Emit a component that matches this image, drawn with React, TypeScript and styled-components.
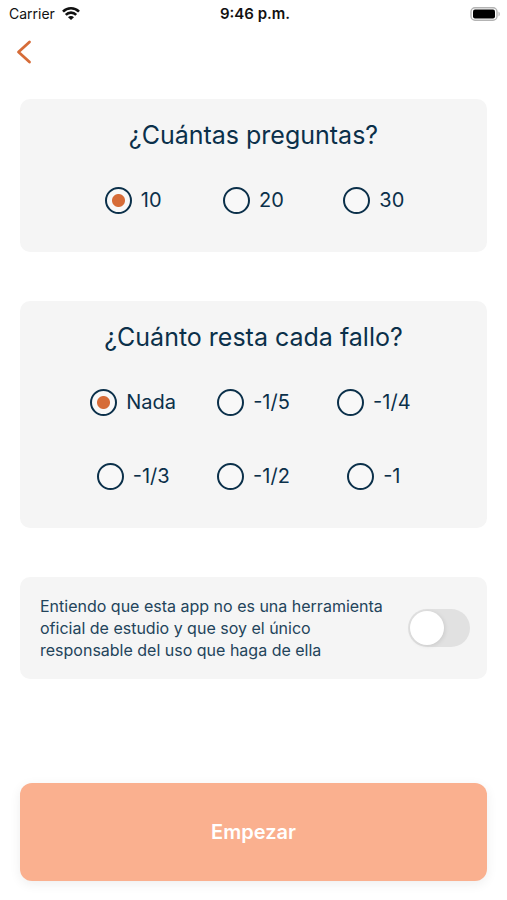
import React, { useState } from "react";
import styled, { createGlobalStyle } from "styled-components";

const Global = createGlobalStyle`
  *, *::before, *::after { box-sizing: border-box; }
  body { margin: 0; background: #fff; color: #0b304a; font-family: Inter, "Liberation Sans", sans-serif; }
`;

const Screen = styled.div`
  min-height: 100vh;
  display: flex;
  flex-direction: column;
  padding-bottom: 19px;
`;

const StatusBar = styled.header`
  display: grid;
  grid-template-columns: 1fr auto 1fr;
  align-items: center;
  height: 27px;
  padding: 0 6px 0 9px;
  color: #111;
  font-size: 14px;
`;

const Carrier = styled.span`
  display: flex;
  align-items: center;
  gap: 7px;
`;

const Clock = styled.time`
  font-size: 15px;
  font-weight: 600;
`;

const Battery = styled.svg`
  justify-self: end;
`;

const BackButton = styled.button`
  align-self: flex-start;
  display: flex;
  margin-left: 12px;
  padding: 13px 4px;
  border: 0;
  background: none;
  cursor: pointer;
`;

const Main = styled.main`
  flex: 1;
  display: flex;
  flex-direction: column;
  gap: 49px;
  padding: 22px 20px 0;
`;

const Card = styled.fieldset`
  margin: 0;
  border: 0;
  min-width: 0;
  border-radius: 10px;
  background: #f5f5f5;
  padding: 18px 53px 35px;
`;

const Title = styled.legend`
  float: left;
  width: 100%;
  padding: 0;
  text-align: center;
  font-size: 25px;
  line-height: 36px;
`;

const Options = styled.div`
  clear: both;
  display: grid;
  grid-template-columns: repeat(3, 1fr);
  row-gap: 40px;
  padding-top: 30px;
`;

const Option = styled.label`
  display: flex;
  align-items: center;
  justify-content: center;
  gap: 9px;
  font-size: 20px;
  line-height: 34px;
  white-space: nowrap;
  cursor: pointer;
`;

const Radio = styled.input`
  appearance: none;
  flex: none;
  width: 27px;
  height: 27px;
  margin: 0;
  border: 2px solid #0b304a;
  border-radius: 50%;
  background: #f8f8f8;
  &:checked { background: radial-gradient(circle, #d66c38 6px, #f8f8f8 7px); }
`;

const Consent = styled.label`
  display: flex;
  align-items: center;
  justify-content: space-between;
  gap: 24px;
  padding: 18px 17px 18px 20px;
  border-radius: 10px;
  background: #f5f5f5;
  color: #23445b;
  font-size: 16px;
  line-height: 22px;
`;

const ConsentText = styled.span`
  max-width: 344px;
`;

const Switch = styled.input`
  appearance: none;
  flex: none;
  display: flex;
  width: 62px;
  height: 38px;
  margin: 0;
  padding: 2px;
  border-radius: 19px;
  background: #e1e1e1;
  cursor: pointer;
  &::before {
    content: "";
    width: 34px;
    height: 34px;
    border-radius: 50%;
    background: #fff;
    box-shadow: 1px 1px 4px rgba(0, 0, 0, 0.1);
  }
  &:checked { background: #d66c38; justify-content: flex-end; }
`;

const Start = styled.button`
  margin-top: auto;
  height: 98px;
  border: 0;
  border-radius: 12px;
  background: #fab08f;
  color: #fff;
  font: 600 20px Inter, "Liberation Sans", sans-serif;
  box-shadow: 0 3px 12px rgba(0, 0, 0, 0.07);
`;

type GroupProps = { name: string; title: string; options: string[] };

function RadioCard({ name, title, options }: GroupProps) {
  const [value, setValue] = useState(options[0]);
  return (
    <Card>
      <Title>{title}</Title>
      <Options>
        {options.map((option) => (
          <Option key={option}>
            <Radio type="radio" name={name} value={option} checked={value === option} onChange={() => setValue(option)} />
            {option}
          </Option>
        ))}
      </Options>
    </Card>
  );
}

export default function App() {
  const [accepted, setAccepted] = useState(false);
  return (
    <Screen>
      <Global />
      <StatusBar>
        <Carrier>
          Carrier
          <svg width="18" height="13" viewBox="0 0 18 13" fill="none" stroke="#111" strokeWidth="2.6" aria-hidden="true">
            <path d="M1 4.6a11.4 11.4 0 0 1 16 0M3.8 7.8a7.4 7.4 0 0 1 10.4 0" />
            <path d="M9 13 6 10.2a4.2 4.2 0 0 1 6 0z" fill="#111" stroke="none" />
          </svg>
        </Carrier>
        <Clock>9:46 p.m.</Clock>
        <Battery width="31" height="14" viewBox="0 0 31 14" aria-hidden="true">
          <rect x="1" y="0.7" width="26" height="12.6" rx="4" fill="none" stroke="#b3b3b3" strokeWidth="1.4" />
          <rect x="3" y="2.5" width="22" height="9" rx="2" fill="#000" />
          <path d="M28.5 4.5a3 3 0 0 1 0 5z" fill="#b3b3b3" />
        </Battery>
      </StatusBar>
      <BackButton type="button" aria-label="Atrás">
        <svg width="16" height="24" viewBox="0 0 16 24" fill="none" stroke="#d66c38" strokeWidth="2.8" strokeLinecap="round" strokeLinejoin="round">
          <path d="M13.5 2 2.5 12l11 10" />
        </svg>
      </BackButton>
      <Main>
        <RadioCard name="questions" title="¿Cuántas preguntas?" options={["10", "20", "30"]} />
        <RadioCard name="penalty" title="¿Cuánto resta cada fallo?" options={["Nada", "-1/5", "-1/4", "-1/3", "-1/2", "-1"]} />
        <Consent>
          <ConsentText>Entiendo que esta app no es una herramienta oficial de estudio y que soy el único responsable del uso que haga de ella</ConsentText>
          <Switch type="checkbox" role="switch" checked={accepted} onChange={(e) => setAccepted(e.target.checked)} />
        </Consent>
        <Start type="button" disabled={!accepted}>Empezar</Start>
      </Main>
    </Screen>
  );
}
